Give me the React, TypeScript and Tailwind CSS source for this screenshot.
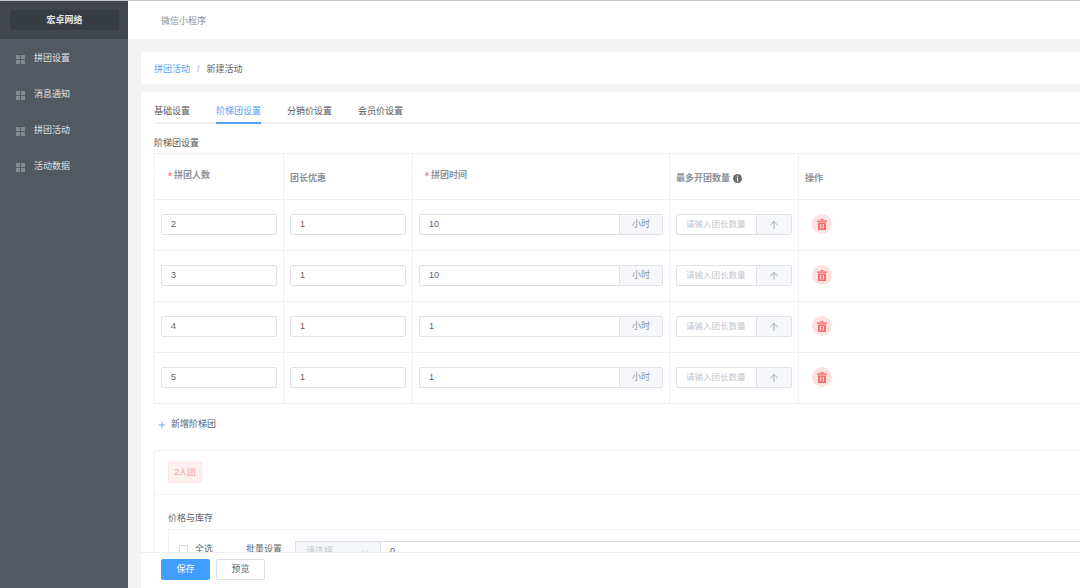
import { ArrowUp, ChevronDown, Plus } from "lucide-react";

const menu = ["拼团设置", "消息通知", "拼团活动", "活动数据"];
const tabs = ["基础设置", "阶梯团设置", "分销价设置", "会员价设置"];
const rows = [
    { people: "2", hours: "10" },
    { people: "3", hours: "10" },
    { people: "4", hours: "1" },
    { people: "5", hours: "1" },
];

const colGrid = "grid grid-cols-[129px_129px_257px_129px_1fr]";

function Sidebar() {
    return (
        <aside className="w-[128px] shrink-0 bg-[#525961] flex flex-col">
            <div className="h-[38px] bg-[#41454c] pl-[10px] pr-[9px] flex items-center">
                <div className="h-[20px] w-full bg-[#373b42] rounded-[2px] flex items-center justify-center pt-[1px] font-bold text-[#e4e5e7]">
                    宏卓网络
                </div>
            </div>
            <ul className="pt-[2px]">
                {menu.map((m) => (
                    <li key={m} className="h-[36px] flex items-center pl-[16px] text-[#dfe1e3]">
                        <span className="grid grid-cols-2 gap-[1px] w-[9px] h-[9px] mr-[9px]">
                            <i className="bg-[#858a90]" />
                            <i className="bg-[#858a90]" />
                            <i className="bg-[#858a90]" />
                            <i className="bg-[#858a90]" />
                        </span>
                        {m}
                    </li>
                ))}
            </ul>
        </aside>
    );
}

function Required({ text }: { text: string }) {
    return (
        <span className="flex items-center h-[20px]">
            <span className="text-[#f78989] mr-[2px] text-[10px]">*</span>
            {text}
        </span>
    );
}

function TrashIcon() {
    return (
        <svg width="10" height="11" viewBox="0 0 10 11" fill="#f56c6c">
            <rect x="3.5" y="0" width="3" height="1.2" />
            <rect x="0" y="1.4" width="10" height="1.4" />
            <path d="M1 3.6h8v7.4H1zM3 5v4.4h1.2V5zM5.8 5v4.4H7V5z" fillRule="evenodd" />
        </svg>
    );
}

function InfoIcon() {
    return (
        <svg width="9" height="9" viewBox="0 0 9 9" className="ml-[3px]">
            <circle cx="4.5" cy="4.5" r="4.5" fill="#6b6e73" />
            <rect x="4" y="1.6" width="1.1" height="1.1" fill="#fff" />
            <rect x="4" y="3.5" width="1.1" height="3.8" fill="#fff" />
        </svg>
    );
}

function Row({ people, hours }: { people: string; hours: string }) {
    const input = "w-full h-[21px] border border-[#dfe2e8] rounded-[2px] bg-white flex items-center pl-[9px] text-[#5f6266]";
    const cell = "border-r border-[#eff0f4] flex items-center px-[6px] pb-[1px]";
    return (
        <div className={`${colGrid} h-[51px] border-b border-[#eff0f4]`}>
            <div className={cell}>
                <div className={input}>{people}</div>
            </div>
            <div className={cell}>
                <div className={input}>1</div>
            </div>
            <div className={cell}>
                <div className={`${input} justify-between`}>
                    {hours}
                    <span className="w-[43px] h-full bg-[#f5f7fa] border-l border-[#dfe2e8] flex items-center justify-center text-[#909399]">小时</span>
                </div>
            </div>
            <div className={cell}>
                <div className={`${input} justify-between !text-[#c3c6cc] text-[8.5px]`}>
                    请输入团长数量
                    <span className="w-[35px] h-full bg-[#f5f7fa] border-l border-[#dfe2e8] flex items-center justify-center text-[#909399]">
                        <ArrowUp size={12} strokeWidth={1.5} />
                    </span>
                </div>
            </div>
            <div className="flex items-center pl-[13px] pb-[2px]">
                <span className="w-[20px] h-[20px] rounded-full bg-[#fde2e2] flex items-center justify-center">
                    <TrashIcon />
                </span>
            </div>
        </div>
    );
}

export default function App() {
    return (
        <div className="w-[1080px] h-[588px] overflow-hidden flex flex-col bg-[#f3f3f4] text-[9px] font-['Liberation_Sans','Noto_Sans_CJK_SC',sans-serif]">
            <div className="h-[1px] bg-[#c4c4c4] shrink-0" />
            <div className="flex flex-1 min-h-0">
                <Sidebar />
                <main className="flex-1 min-w-0 flex flex-col relative">
                    <header className="h-[38px] bg-white flex items-center pl-[33px] pt-[3px] text-[#8c8f94] shrink-0">
                        微信小程序
                    </header>
                    <div className="ml-[13px] mt-[13px] flex flex-col flex-1 min-h-0">
                        <div className="h-[32px] bg-white rounded-l-[2px] flex items-center pl-[13px] pt-[3px] shrink-0">
                            <span className="text-[#56a0f5]">拼团活动</span>
                            <span className="mx-[7px] text-[#a8abb2]">/</span>
                            <span className="text-[#606266]">新建活动</span>
                        </div>
                        <div className="mt-[8px] bg-white rounded-l-[2px] flex-1 min-h-0 pl-[13px] overflow-hidden">
                            <div className="h-[32px] flex items-end gap-[26px] border-b-2 border-[#eef0f3] text-[#54575c]">
                                {tabs.map((t, i) => (
                                    <span
                                        key={t}
                                        className={i === 1 ? "h-[32px] -mb-[2px] pt-[13px] text-[#56a0f5] border-b-2 border-[#56a0f5]" : "h-[32px] -mb-[2px] pt-[13px]"}
                                    >
                                        {t}
                                    </span>
                                ))}
                            </div>
                            <div className="mt-[13px] h-[16px] text-[#54575c]">阶梯团设置</div>
                            <div className="border-l border-t border-[#eff0f4]">
                                <div className={`${colGrid} h-[46px] border-b border-[#eff0f4] text-[#909399] font-bold`}>
                                    <div className="border-r border-[#eff0f4] pl-[13px] pt-[12px]">
                                        <Required text="拼团人数" />
                                    </div>
                                    <div className="border-r border-[#eff0f4] pl-[6px] pt-[15px]">
                                        <span className="h-[20px] flex items-center">团长优惠</span>
                                    </div>
                                    <div className="border-r border-[#eff0f4] pl-[12px] pt-[12px]">
                                        <Required text="拼团时间" />
                                    </div>
                                    <div className="border-r border-[#eff0f4] pl-[6px] pt-[4px] flex items-center">
                                        最多开团数量
                                        <InfoIcon />
                                    </div>
                                    <div className="pl-[6px] pt-[4px] flex items-center">操作</div>
                                </div>
                                {rows.map((r) => (
                                    <Row key={r.people} people={r.people} hours={r.hours} />
                                ))}
                            </div>
                            <div className="h-[20px] mt-[11px] pl-[3px] flex items-center text-[#606266]">
                                <Plus size={10} className="text-[#56a0f5] mr-[4px]" />
                                新增阶梯团
                            </div>
                            <div className="mt-[15px] border-l border-t border-[#f1f2f6] rounded-tl-[3px] pb-[8px]">
                                <div className="h-[44px] pl-[13px] flex items-center border-b border-[#f5f6f9]">
                                    <span className="h-[21px] w-[34px] rounded-[2px] bg-[#fef0f0] border border-[#fde2e2] text-[#f89898] text-[8.5px] flex items-center justify-center">
                                        2人团
                                    </span>
                                </div>
                                <div className="pl-[13px] pt-[17px] h-[34px] text-[#606266]">价格与库存</div>
                                <div className="ml-[13px] border-l border-t border-[#f3f4f6] h-[40px] pt-[12px] pl-[10px] flex items-start text-[#606266]">
                                    <span className="w-[9px] h-[9px] border border-[#dcdfe6] mt-[3px] shrink-0" />
                                    <span className="ml-[7px] mt-[1px] shrink-0">全选</span>
                                    <span className="ml-[33px] mt-[1px] shrink-0">批量设置</span>
                                    <div className="ml-[13px] w-[900px] shrink-0 h-[21px] -mt-[1px] border border-[#dfe2e8] flex items-center">
                                        <span className="w-[85px] h-full bg-[#f5f7fa] border-r border-[#dfe2e8] flex items-center justify-between px-[10px] text-[#c3c6cc]">
                                            请选择
                                            <ChevronDown size={10} />
                                        </span>
                                        <span className="pl-[9px]">0</span>
                                    </div>
                                </div>
                            </div>
                        </div>
                    </div>
                    <div className="absolute left-[13px] right-0 bottom-0 h-[36px] bg-white border-t border-[#f0f0f2] flex items-center pl-[20px] pb-[2px] gap-[6px]">
                        <button className="w-[49px] h-[21px] bg-[#409eff] rounded-[2px] text-white">保存</button>
                        <button className="w-[49px] h-[21px] bg-white border border-[#dcdfe6] rounded-[2px] text-[#606266]">预览</button>
                    </div>
                </main>
            </div>
        </div>
    );
}
